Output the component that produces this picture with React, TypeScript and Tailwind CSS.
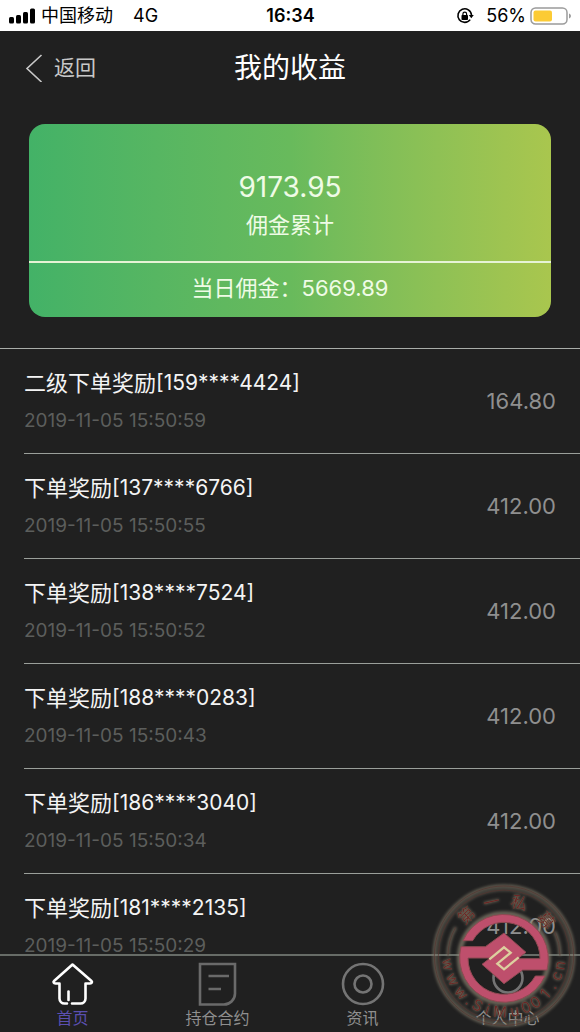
import React from "react";

type Income = {
  title: string;
  account: string;
  time: string;
  amount: string;
};

const INCOMES: Income[] = [
  { title: "二级下单奖励", account: "[159****4424]", time: "2019-11-05 15:50:59", amount: "164.80" },
  { title: "下单奖励", account: "[137****6766]", time: "2019-11-05 15:50:55", amount: "412.00" },
  { title: "下单奖励", account: "[138****7524]", time: "2019-11-05 15:50:52", amount: "412.00" },
  { title: "下单奖励", account: "[188****0283]", time: "2019-11-05 15:50:43", amount: "412.00" },
  { title: "下单奖励", account: "[186****3040]", time: "2019-11-05 15:50:34", amount: "412.00" },
  { title: "下单奖励", account: "[181****2135]", time: "2019-11-05 15:50:29", amount: "412.00" },
];

const StatusBar: React.FC = () => (
  <div className="grid h-[31px] shrink-0 grid-cols-3 items-center bg-white pl-[9px] pr-2 text-[18px] leading-6 text-black">
    <div className="flex items-center whitespace-nowrap">
      <svg viewBox="0 0 26 16" className="h-4 w-[26px]" fill="currentColor">
        <rect x="0" y="9" width="5" height="6.500" rx="1.500" />
        <rect x="7" y="7" width="5" height="8.500" rx="1.500" />
        <rect x="14" y="4" width="5" height="11.500" rx="1.500" />
        <rect x="21" y="0.500" width="5" height="15" rx="1.500" />
      </svg>
      <span className="ml-1.5">中国移动</span>
      <span className="ml-5">4G</span>
    </div>
    <div className="text-center font-semibold">16:34</div>
    <div className="flex items-center justify-end">
      <svg viewBox="0 0 18 18" className="h-[18px] w-[18px]" fill="none" stroke="currentColor" strokeWidth="1.600">
        <path d="M14.200 12.600A6.800 6.800 0 1 1 15.500 8" />
        <path d="M12.800 8h5l-2.500 3.200z" fill="currentColor" stroke="none" />
        <rect x="5.500" y="8" width="6.500" height="5" rx="0.800" fill="currentColor" stroke="none" />
        <path d="M6.900 8.500V7a1.850 1.850 0 0 1 3.700 0v1.500" strokeWidth="1.200" />
      </svg>
      <span className="ml-3">56%</span>
      <svg viewBox="0 0 42 18" className="ml-1 h-[18px] w-[42px]">
        <rect x="1" y="1" width="36" height="16" rx="4.500" fill="#fff" stroke="#9b9b9b" strokeWidth="1.500" />
        <rect x="3.500" y="3.500" width="18.500" height="11" rx="2" fill="#fccb35" />
        <path d="M39 6.500v5c2.600-1 2.600-4 0-5z" fill="#9b9b9b" />
      </svg>
    </div>
  </div>
);

const Header: React.FC = () => (
  <header className="grid h-[73px] shrink-0 grid-cols-3 items-center px-6">
    <button type="button" className="flex items-center gap-2.5 text-[21px] leading-7 text-[#c8c8c8]">
      <svg viewBox="0 0 20 28" className="h-7 w-5" fill="none" stroke="currentColor" strokeWidth="1.600">
        <path d="M17.500 1 3 14.500 17.500 28" />
      </svg>
      返回
    </button>
    <h1 className="text-center text-[28px] leading-9 text-white">我的收益</h1>
  </header>
);

const Summary: React.FC = () => (
  <section className="mx-[29px] mt-5 mb-[31px] overflow-hidden rounded-2xl bg-linear-to-r from-[#43b267] via-[#68ba5c] to-[#a9c64e] text-center text-[#effbe6]">
    <div className="border-b-2 border-[#e6f3d5] pt-[45px] pb-5">
      <p className="text-[28px] leading-9">9173.95</p>
      <p className="mt-1 text-[22px] leading-8">佣金累计</p>
    </div>
    <p className="pt-2 pb-3 text-[22px] leading-[34px]">当日佣金：5669.89</p>
  </section>
);

const IncomeRow: React.FC<{ income: Income }> = ({ income }) => (
  <li className="ml-6 flex items-center justify-between border-b border-[#9a9f9a] py-4 pr-6">
    <div>
      <p className="flex items-center text-[22px] leading-9 text-[#f4f4f4]">
        {income.title}
        <span className="text-[21px] leading-9">{income.account}</span>
      </p>
      <p className="mt-1 text-[19px] leading-8 text-[#5c5e5c]">{income.time}</p>
    </div>
    <span className="text-[22px] leading-8 text-[#8f8f8f]">{income.amount}</span>
  </li>
);

const HomeIcon = () => (
  <svg viewBox="0 0 44 44" className="h-11 w-11" fill="none" stroke="currentColor" strokeWidth="2.600" strokeLinecap="round" strokeLinejoin="round">
    <path d="M16 41.500h-2.500a5 5 0 0 1-5-5V21.500H4.500c-2 0-2.600-1.500-1.200-2.700L21.500 2.500l18.700 16.300c1.400 1.200.8 2.700-1.200 2.700h-4.500v15a5 5 0 0 1-5 5H21" />
    <path d="M17.500 29.500v8.500" />
  </svg>
);

const ContractIcon = () => (
  <svg viewBox="0 0 44 44" className="h-11 w-11" fill="none" stroke="currentColor" strokeWidth="2.600">
    <path d="M4 2h35v29.500a11 11 0 0 1-11 11H4z" />
    <path d="M12.500 14H33M12.500 27H25" />
  </svg>
);

const NewsIcon = () => (
  <svg viewBox="0 0 44 44" className="h-11 w-11" fill="none" stroke="currentColor" strokeWidth="2.600">
    <circle cx="22" cy="22" r="20" />
    <circle cx="22" cy="22" r="8.500" />
  </svg>
);

const ProfileIcon = () => (
  <svg viewBox="0 0 44 44" className="h-11 w-11" fill="none" stroke="currentColor" strokeWidth="2.600">
    <circle cx="22" cy="16" r="14.500" />
  </svg>
);

const TABS = [
  { label: "首页", icon: <HomeIcon />, iconColor: "text-white", labelColor: "text-[#5b4fb0]" },
  { label: "持仓合约", icon: <ContractIcon />, iconColor: "text-[#6a6a6a]", labelColor: "text-[#8f8f8f]" },
  { label: "资讯", icon: <NewsIcon />, iconColor: "text-[#747474]", labelColor: "text-[#8f8f8f]" },
  { label: "个人中心", icon: <ProfileIcon />, iconColor: "text-[#747474]", labelColor: "text-[#8f8f8f]" },
];

const TabBar: React.FC = () => (
  <nav className="grid shrink-0 grid-cols-4 border-t-2 border-[#676c67] bg-[#202020]">
    {TABS.map((tab) => (
      <a key={tab.label} href="#" className="flex flex-col items-center pt-1.5 pb-0.5 text-base leading-6">
        <span className={tab.iconColor}>{tab.icon}</span>
        <span className={tab.labelColor}>{tab.label}</span>
      </a>
    ))}
  </nav>
);

// angle in degrees from the bottom of the seal, positive to the right
const SEAL_URL: [string, number][] = [
  ["w", -81], ["w", -65], ["w", -49], [".", -38], ["S", -28], ["i", -17], ["M", -4],
  ["u", 11], ["0", 23], ["0", 34], ["1", 47], [".", 58], ["c", 69], ["n", 80],
];

// same, from the top
const SEAL_NAME: [string, number][] = [["第", -43], ["一", -13], ["私", 16], ["募", 50]];

const SWIRL =
  "M189 212A134 134 0 0 1 441 300H368L312 341 246 283 312 232 332 248 292 281 312 298 350 266H420A108 108 0 0 0 218 212Z";

const Seal: React.FC = () => (
  <svg viewBox="93 36 444 444" className="pointer-events-none absolute right-px bottom-0.5 h-[148px] w-[148px]">
    <defs>
      <filter id="glow" x="-20%" y="-20%" width="140%" height="140%">
        <feGaussianBlur stdDeviation="4" />
      </filter>
      <filter id="halo" x="-30%" y="-30%" width="160%" height="160%">
        <feDropShadow dx="0" dy="0" stdDeviation="4" floodColor="#a39a80" floodOpacity="0.900" />
      </filter>
    </defs>
    <g fill="none" stroke="#8a8270" strokeWidth="9" opacity="0.700" filter="url(#glow)">
      <circle cx="312" cy="257" r="209" />
      <circle cx="312" cy="257" r="197" strokeWidth="4" />
      <path d="M144 257A168 168 0 0 1 167 172M480 257A168 168 0 0 0 464 185" />
      <circle cx="312" cy="265" r="134" strokeWidth="14" />
    </g>
    <g fill="none" stroke="#54332f" strokeWidth="2">
      <circle cx="312" cy="257" r="209" />
      <circle cx="312" cy="257" r="197" />
      <path d="M144 257A168 168 0 0 1 167 172M480 257A168 168 0 0 0 464 185" />
    </g>
    <g fill="#be4f6c" stroke="#8f4a52" strokeWidth="3" strokeLinejoin="round">
      <path d={SWIRL} />
      <path d={SWIRL} transform="rotate(180 312 265)" />
    </g>
    <g fill="none" strokeLinejoin="miter">
      <path d="M268 268 312 232 332 248 292 281 312 298 356 262" stroke="#ddcf9f" strokeWidth="7" />
    </g>
    <g fontSize="46" textAnchor="middle" fill="#6b2826" filter="url(#halo)">
      {SEAL_NAME.map(([ch, deg]) => (
        <text key={deg} x="312" y="110" fontSize="50" transform={`rotate(${deg} 312 257)`}>
          {ch}
        </text>
      ))}
      {SEAL_URL.map(([ch, deg]) => (
        <text key={deg} x="312" y="442" transform={`rotate(${-deg} 312 257)`}>
          {ch}
        </text>
      ))}
    </g>
  </svg>
);

const App: React.FC = () => (
  <div className="relative flex h-screen flex-col overflow-hidden bg-[#202020] font-['Inter','Noto_Sans_CJK_SC',sans-serif]">
    <StatusBar />
    <Header />
    <main className="min-h-0 flex-1 overflow-y-auto [scrollbar-width:none]">
      <Summary />
      <ul className="border-t border-[#a9ada9]">
        {INCOMES.map((income) => (
          <IncomeRow key={income.time} income={income} />
        ))}
      </ul>
    </main>
    <TabBar />
    <Seal />
  </div>
);

export default App;
